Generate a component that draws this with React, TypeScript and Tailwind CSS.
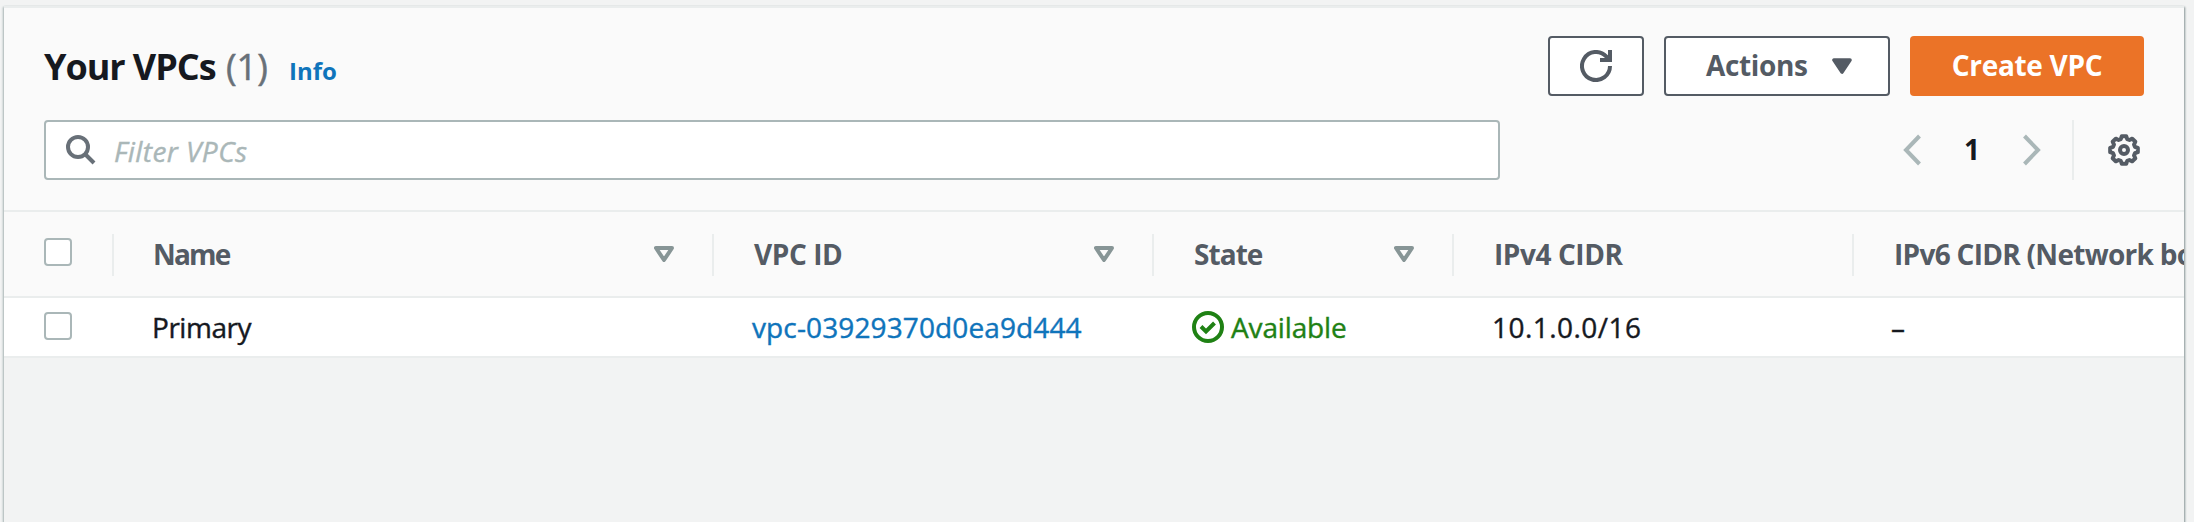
import React from "react";

type Column = {
  label: string;
  headerClass: string;
  width: string;
  sortable: boolean;
};

const columns: Column[] = [
  { label: "Name", headerClass: "pl-[39px] tracking-[-1.8px]", width: "w-[600px]", sortable: true },
  { label: "VPC ID", headerClass: "pl-10 tracking-[-0.43px]", width: "w-[440px]", sortable: true },
  { label: "State", headerClass: "pl-10 tracking-[-0.95px]", width: "w-[300px]", sortable: true },
  { label: "IPv4 CIDR", headerClass: "pl-10 tracking-[-0.43px]", width: "w-[400px]", sortable: false },
  {
    label: "IPv6 CIDR (Network border group)",
    headerClass: "pl-10 tracking-[-0.71px]",
    width: "w-[600px]",
    sortable: false,
  },
];

// Outline of an eight-toothed gear centred in a 32x32 box.
const gearPath =
  Array.from({ length: 8 }, (_, k) =>
    [
      [-9, 14],
      [9, 14],
      [16.5, 11.4],
      [28.5, 11.4],
    ].map(([deg, r]) => {
      const a = ((k * 45 + deg) * Math.PI) / 180;
      return `${(16 + r * Math.sin(a)).toFixed(2)} ${(16 - r * Math.cos(a)).toFixed(2)}`;
    }),
  )
    .flat()
    .map((p, i) => (i === 0 ? `M${p}` : `L${p}`))
    .join("") + "z";

function SortIcon() {
  return (
    <svg className="mr-10 h-4 w-5 shrink-0" viewBox="0 0 20 16">
      <path d="M2 2h16l-8 12z" fill="none" stroke="#879596" strokeWidth="4" strokeLinejoin="round" />
    </svg>
  );
}

function RefreshIcon() {
  return (
    <svg className="h-8 w-8" viewBox="0 0 16 16" fill="none" stroke="#545b64" strokeWidth="2">
      <path d="M15 8a7 7 0 1 1-1.9-4.8L14.6 5" />
      <path d="M10 5h5V0" />
    </svg>
  );
}

function GearIcon() {
  return (
    <svg className="h-8 w-8" viewBox="0 0 32 32" fill="none" stroke="#545b64" strokeWidth="4">
      <path strokeLinejoin="round" d={gearPath} />
      <circle cx="16" cy="16" r="4" />
    </svg>
  );
}

function Checkbox() {
  return <div role="checkbox" aria-checked="false" className="size-7 rounded-[4px] border-2 border-[#aab7b8] bg-white" />;
}

export default function App() {
  return (
    <div className="h-[522px] w-[2194px] overflow-hidden bg-[#f2f3f3] pt-1.5 pl-1 font-['Open_Sans','Noto_Sans',sans-serif] text-[28px] text-[#16191f]">
      <main className="h-[518px] w-[2180px] border-t-2 border-[#eaeded] shadow-[1px_1px_2px_0_#879596,-1px_1px_2px_0_#aab7b8]">
        <header className="h-[204px] border-b-2 border-[#eaeded] bg-[#fafafa] pt-7 pr-10 pl-10">
          <div className="flex h-[60px] items-center justify-between">
            <h1 className="flex items-baseline pt-0.5 text-[36px] leading-[60px] font-bold whitespace-nowrap">
              <span className="w-[182px] tracking-[-1.05px]">Your VPCs</span>
              <span className="w-[63px] font-normal text-[#687078] [-webkit-text-stroke:0.5px]">(1)</span>
              <a className="text-[24px] leading-none text-[#0f74bb]">Info</a>
            </h1>
            <div className="flex gap-5 leading-[56px] font-bold">
              <button className="flex h-[60px] w-24 items-center justify-center rounded-[4px] border-2 border-[#545b64] bg-white">
                <RefreshIcon />
              </button>
              <button className="flex h-[60px] w-[226px] items-center justify-between rounded-[4px] border-2 border-[#545b64] bg-white pr-9 pl-10 text-[#545b64]">
                <span className="pb-0.5 tracking-[-0.36px]">Actions</span>
                <svg className="h-4 w-5" viewBox="0 0 20 16">
                  <path d="M2 2h16l-8 12z" fill="#545b64" stroke="#545b64" strokeWidth="3.6" strokeLinejoin="round" />
                </svg>
              </button>
              <button className="h-[60px] w-[234px] rounded-[4px] bg-[#eb7327] pb-0.5 tracking-[-0.31px] text-white">
                Create VPC
              </button>
            </div>
          </div>

          <div className="mt-6 flex h-[60px] items-center justify-between">
            <div className="flex h-[60px] w-[1456px] items-center rounded-[4px] border-2 border-[#aab7b8] bg-white pl-5">
              <svg className="size-[30px]" viewBox="0 0 30 30" fill="none" stroke="#687078" strokeWidth="4">
                <circle cx="12" cy="12" r="10" />
                <path d="M19 19l9 9" />
              </svg>
              <span className="ml-[18px] pt-0.5 tracking-[0.43px] text-[#aab7b8] italic [-webkit-text-stroke:0.4px]">
                Filter VPCs
              </span>
            </div>
            <div className="flex h-[60px] items-center">
              <svg className="h-8 w-[18px]" viewBox="0 0 18 32" fill="none" stroke="#aab7b8" strokeWidth="4">
                <path d="M16.5 2L3 16l13.5 14" />
              </svg>
              <span className="w-[102px] pb-0.5 text-center font-bold">1</span>
              <svg className="h-8 w-[18px]" viewBox="0 0 18 32" fill="none" stroke="#aab7b8" strokeWidth="4">
                <path d="M1.5 2L15 16 1.5 30" />
              </svg>
              <div className="mr-[34px] ml-[31px] h-[60px] w-0.5 bg-[#eaeded]" />
              <div className="mr-1">
                <GearIcon />
              </div>
            </div>
          </div>
        </header>

        <div className="w-[2180px] overflow-hidden">
          <div className="flex h-[86px] w-[2450px] border-b-2 border-[#eaeded] bg-[#fafafa] font-bold text-[#545b64]">
            <div className="w-[110px] shrink-0 pt-[26px] pl-10">
              <Checkbox />
            </div>
            {columns.map((c) => (
              <div key={c.label} className={`flex h-[84px] shrink-0 items-center pb-px ${c.width}`}>
                <div className="mt-[22px] -ml-0.5 h-[42px] w-0.5 shrink-0 self-start bg-[#eaeded]" />
                <span className={`grow leading-[82px] whitespace-nowrap ${c.headerClass}`}>{c.label}</span>
                {c.sortable && <SortIcon />}
              </div>
            ))}
          </div>

          <div className="flex h-[60px] w-[2450px] border-b-2 border-[#eaeded] bg-white leading-[58px] whitespace-nowrap [-webkit-text-stroke:0.4px]">
            <div className="w-[110px] shrink-0 pt-3.5 pl-10">
              <Checkbox />
            </div>
            <div className="w-[600px] pl-[38px] tracking-[-0.46px]">Primary</div>
            <a className="w-[440px] pl-[38px] tracking-[0.12px] text-[#0f74bb]">vpc-03929370d0ea9d444</a>
            <div className="flex w-[300px] items-center pl-[38px] tracking-[-0.14px] text-[#1f8114]">
              <svg className="size-8" viewBox="0 0 32 32" fill="none" stroke="#1f8114" strokeWidth="4">
                <circle cx="16" cy="16" r="14" />
                <path d="M9 15.5l5 5 8.5-8.5" />
              </svg>
              <span className="ml-[7px]">Available</span>
            </div>
            <div className="w-[400px] pl-[38px] tracking-[0.45px]">10.1.0.0/16</div>
            <div className="w-[600px] pl-[37px]">–</div>
          </div>
        </div>
      </main>
    </div>
  );
}
